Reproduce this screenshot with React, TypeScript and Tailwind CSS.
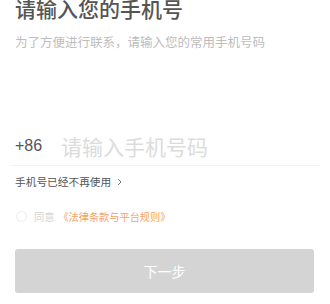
import React from "react";

export default function App() {
  const cjk = { fontFamily: '"Noto Sans CJK SC", "Noto Sans", sans-serif' };
  return (
    <div className="w-[330px] h-[304px] overflow-hidden bg-white px-[15px]" style={cjk}>
      <div className="mt-[-2px] text-[21px] leading-none font-medium text-[#555] whitespace-nowrap">请输入您的手机号</div>
      <div className="mt-[17px] text-[12.5px] leading-none text-[#bdbdbd] whitespace-nowrap">
        为了方便进行联系，请输入您的常用手机号码
      </div>
      <div className="mt-[87px] -mx-[5px] px-[5px] pb-[8px] flex items-center border-b border-[#f3f3f3]">
        <span
          className="w-[46px] text-[16px] leading-none text-[#555]"
          style={{ fontFamily: '"Liberation Sans", Arial, sans-serif' }}
        >
          +86
        </span>
        <span className="text-[21px] leading-none text-[#dcdcdc] whitespace-nowrap">请输入手机号码</span>
      </div>
      <div className="mt-[11px] flex items-center text-[10.7px] leading-none text-[#555]">
        <span>手机号已经不再使用</span>
        <svg className="ml-[6px]" width="5" height="8" viewBox="0 0 5 8" fill="none">
          <path d="M1 1l3 3-3 3" stroke="#777" strokeWidth="1" />
        </svg>
      </div>
      <div className="mt-[24px] flex items-center text-[10.2px] leading-none">
        <span className="ml-[1px] w-[11px] h-[11px] rounded-full border border-[#ececec]" />
        <span className="ml-[7px] text-[#d4d4d4]">同意</span>
        <span className="ml-[4px] text-[#f4a26a]">《法律条款与平台规则》</span>
      </div>
      <button className="mt-[27px] w-[299px] h-[44px] rounded-[3px] bg-[#d4d4d4] text-white text-[14px] flex items-center justify-center">
        下一步
      </button>
    </div>
  );
}
